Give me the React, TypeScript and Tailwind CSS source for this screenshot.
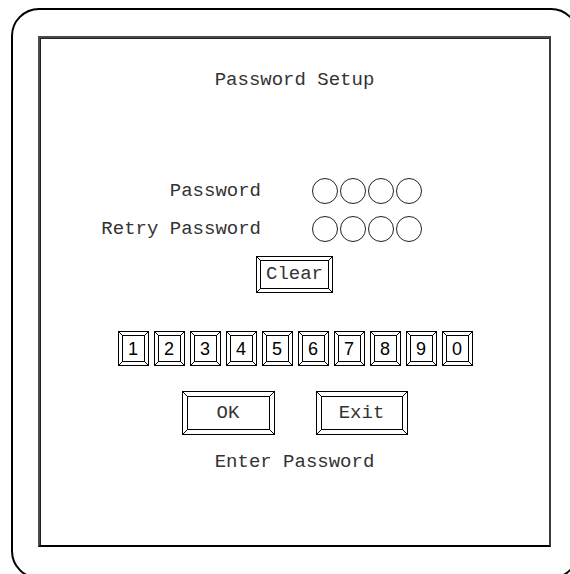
import type { ReactNode } from "react";

const mono = "font-['Liberation_Mono','Courier_New',monospace]";

const digits = ["1", "2", "3", "4", "5", "6", "7", "8", "9", "0"];

function Bevel({
  w,
  h,
  d,
  className,
  children,
}: {
  w: number;
  h: number;
  d: number;
  className: string;
  children: ReactNode;
}) {
  const o = 0.5;
  const i = d + 0.5;
  return (
    <div className={`relative flex shrink-0 items-center justify-center bg-white ${className}`}>
      <svg
        className="pointer-events-none absolute inset-0"
        width={w}
        height={h}
        viewBox={`0 0 ${w} ${h}`}
        fill="none"
        stroke="#000"
        strokeWidth="1"
      >
        <rect x={o} y={o} width={w - 1} height={h - 1} />
        <rect x={i} y={i} width={w - 1 - 2 * d} height={h - 1 - 2 * d} />
        <line x1={o} y1={o} x2={i} y2={i} />
        <line x1={w - o} y1={o} x2={w - i} y2={i} />
        <line x1={o} y1={h - o} x2={i} y2={h - i} />
        <line x1={w - o} y1={h - o} x2={w - i} y2={h - i} />
      </svg>
      {children}
    </div>
  );
}

function Dots() {
  return (
    <div className="flex gap-[2px]">
      {[0, 1, 2, 3].map((n) => (
        <span key={n} className="h-[26px] w-[26px] rounded-full border border-[#222]" />
      ))}
    </div>
  );
}

export default function App() {
  return (
    <div className="relative h-[574px] w-[570px] overflow-hidden bg-white">
      <div className="ml-[11px] mt-[8px] h-[571px] min-w-[568px] w-[568px] rounded-[28px] border-2 border-black pl-[25px] pt-[26px]">
        <div
          className={`h-[511px] w-[513px] border-2 border-[#4a4a4a] border-b-black border-r-[#3a3a3a] shadow-[inset_1px_1px_0_#222] ${mono} text-[19px] text-[#333]`}
        >
          <div className="mt-[30px] h-[24px] text-center leading-[24px]">Password Setup</div>

          <div className="mt-[80px] flex h-[38px] items-center">
            <div className="w-[221px] text-right">Password</div>
            <div className="ml-[51px]">
              <Dots />
            </div>
          </div>
          <div className="flex h-[38px] items-center">
            <div className="w-[221px] text-right">Retry Password</div>
            <div className="ml-[51px]">
              <Dots />
            </div>
          </div>

          <div className="mt-[8px] flex justify-center">
            <Bevel w={77} h={37} d={4} className="h-[37px] w-[77px]">
              <span className="relative">Clear</span>
            </Bevel>
          </div>

          <div className="mt-[38px] flex justify-center gap-[5px] pl-[1px]">
            {digits.map((n) => (
              <Bevel key={n} w={31} h={35} d={4} className="h-[35px] w-[31px]">
                <span className="relative font-['Liberation_Sans'] text-[18px] leading-none text-black">
                  {n}
                </span>
              </Bevel>
            ))}
          </div>

          <div className="mt-[25px] flex justify-center gap-[41px]">
            <Bevel w={93} h={44} d={5} className="h-[44px] w-[93px]">
              <span className="relative">OK</span>
            </Bevel>
            <Bevel w={92} h={44} d={5} className="h-[44px] w-[92px]">
              <span className="relative">Exit</span>
            </Bevel>
          </div>

          <div className="mt-[15px] h-[24px] text-center leading-[24px]">Enter Password</div>
        </div>
      </div>
    </div>
  );
}
